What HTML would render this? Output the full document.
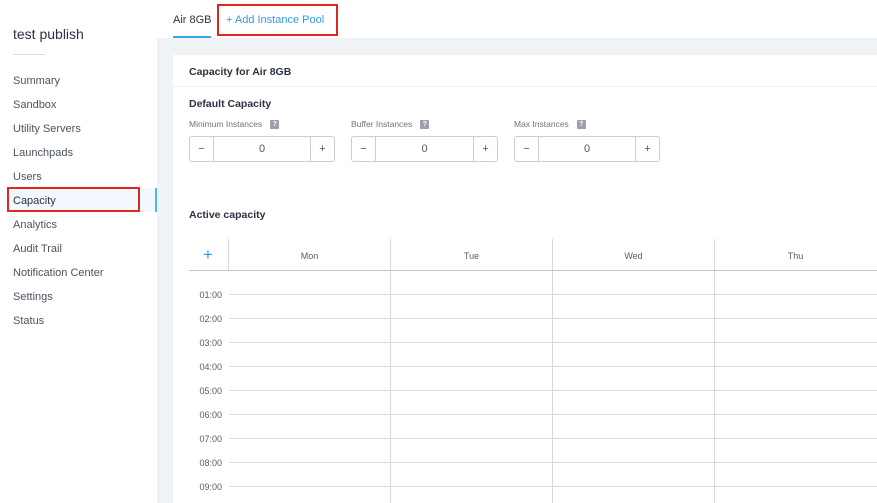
<!DOCTYPE html>
<html><head><style>
*{box-sizing:border-box;margin:0;padding:0}
body{width:877px;height:503px;overflow:hidden;background:#fff;font-family:"Liberation Sans",sans-serif;position:relative;color:#2b3340}
.a{position:absolute}
.nav{left:13px;font-size:11px;color:#4a5361}
.lbl{font-size:8.5px;color:#6b7480}
.q{display:inline-block;width:9px;height:9px;background:#9aa1ab;border-radius:1px;color:#fff;font-size:7px;text-align:center;line-height:9px;font-weight:bold;margin-left:8px;vertical-align:middle}
.st{height:26px;border:1px solid #c9ced6;border-radius:3px;display:flex;font-size:11px;color:#555}
.st div{display:flex;align-items:center;justify-content:center}
.st .m{width:24px;border-right:1px solid #c9ced6}
.st .p{width:24px;border-left:1px solid #c9ced6}
.st .v{flex:1}
.h{left:229px;width:648px;height:1px;background:#d9dee5}
.t{left:189px;width:33px;font-size:9px;color:#555d68;text-align:right}
.vl{width:1px;background:#d4d9e0;top:239px;height:264px}
.day{top:251px;font-size:9px;color:#555d68;text-align:center;width:161px}
</style></head><body>
<div class="a" style="left:13px;top:26px;font-size:14px;color:#2b3340">test publish</div>
<div class="a" style="left:13px;top:54px;width:32px;height:1px;background:#d8dce2"></div>
<div class="a nav" style="top:75px">Summary</div>
<div class="a nav" style="top:99px">Sandbox</div>
<div class="a nav" style="top:123px">Utility Servers</div>
<div class="a nav" style="top:147px">Launchpads</div>
<div class="a nav" style="top:171px">Users</div>
<div class="a" style="left:7px;top:188px;width:150px;height:24px;background:#f3f9fe"></div>
<div class="a" style="left:155px;top:188px;width:2px;height:24px;background:#56b4ee"></div>
<div class="a" style="left:7px;top:187px;width:133px;height:25px;border:2px solid #e0261d"></div>
<div class="a nav" style="top:195px;color:#2b3340">Capacity</div>
<div class="a nav" style="top:219px">Analytics</div>
<div class="a nav" style="top:243px">Audit Trail</div>
<div class="a nav" style="top:267px">Notification Center</div>
<div class="a nav" style="top:291px">Settings</div>
<div class="a nav" style="top:315px">Status</div>

<div class="a" style="left:173px;top:14px;font-size:11px;color:#2b3340">Air 8GB</div>
<div class="a" style="left:173px;top:36px;width:38px;height:2px;background:#3aa3ea"></div>
<div class="a" style="left:217px;top:4px;width:121px;height:32px;border:2px solid #e0261d"></div>
<div class="a" style="left:226px;top:14px;font-size:11px;color:#2f9be6">+ Add Instance Pool</div>

<div class="a" style="left:157px;top:38px;width:720px;height:465px;background:#f0f3f6"></div>
<div class="a" style="left:173px;top:55px;width:704px;height:448px;background:#fff"></div>
<div class="a" style="left:189px;top:66px;font-size:10.5px;font-weight:bold">Capacity for Air 8GB</div>
<div class="a" style="left:173px;top:86px;width:704px;height:1px;background:#eceff3"></div>
<div class="a" style="left:189px;top:98px;font-size:10.5px;font-weight:bold">Default Capacity</div>

<div class="a lbl" style="left:189px;top:119px">Minimum Instances<span class="q">?</span></div>
<div class="a lbl" style="left:351px;top:119px">Buffer Instances<span class="q">?</span></div>
<div class="a lbl" style="left:514px;top:119px">Max Instances<span class="q">?</span></div>
<div class="a st" style="left:189px;top:136px;width:146px"><div class="m">−</div><div class="v">0</div><div class="p">+</div></div>
<div class="a st" style="left:351px;top:136px;width:147px"><div class="m">−</div><div class="v">0</div><div class="p">+</div></div>
<div class="a st" style="left:514px;top:136px;width:146px"><div class="m">−</div><div class="v">0</div><div class="p">+</div></div>

<div class="a" style="left:189px;top:209px;font-size:10.5px;font-weight:bold">Active capacity</div>
<div class="a" style="left:203px;top:245px;font-size:17px;color:#2f9be6;line-height:20px">+</div>
<div class="a" style="left:228px;top:239px;width:1px;height:31px;background:#d4d9e0"></div>
<div class="a vl" style="left:390px"></div>
<div class="a vl" style="left:552px"></div>
<div class="a vl" style="left:714px"></div>
<div class="a day" style="left:229px">Mon</div>
<div class="a day" style="left:391px">Tue</div>
<div class="a day" style="left:553px">Wed</div>
<div class="a day" style="left:715px">Thu</div>
<div class="a" style="left:189px;top:270px;width:688px;height:1px;background:#bfc6cf"></div>

<div class="a h" style="top:294px"></div><div class="a t" style="top:290px">01:00</div>
<div class="a h" style="top:318px"></div><div class="a t" style="top:314px">02:00</div>
<div class="a h" style="top:342px"></div><div class="a t" style="top:338px">03:00</div>
<div class="a h" style="top:366px"></div><div class="a t" style="top:362px">04:00</div>
<div class="a h" style="top:390px"></div><div class="a t" style="top:386px">05:00</div>
<div class="a h" style="top:414px"></div><div class="a t" style="top:410px">06:00</div>
<div class="a h" style="top:438px"></div><div class="a t" style="top:434px">07:00</div>
<div class="a h" style="top:462px"></div><div class="a t" style="top:458px">08:00</div>
<div class="a h" style="top:486px"></div><div class="a t" style="top:482px">09:00</div>
</body></html>
